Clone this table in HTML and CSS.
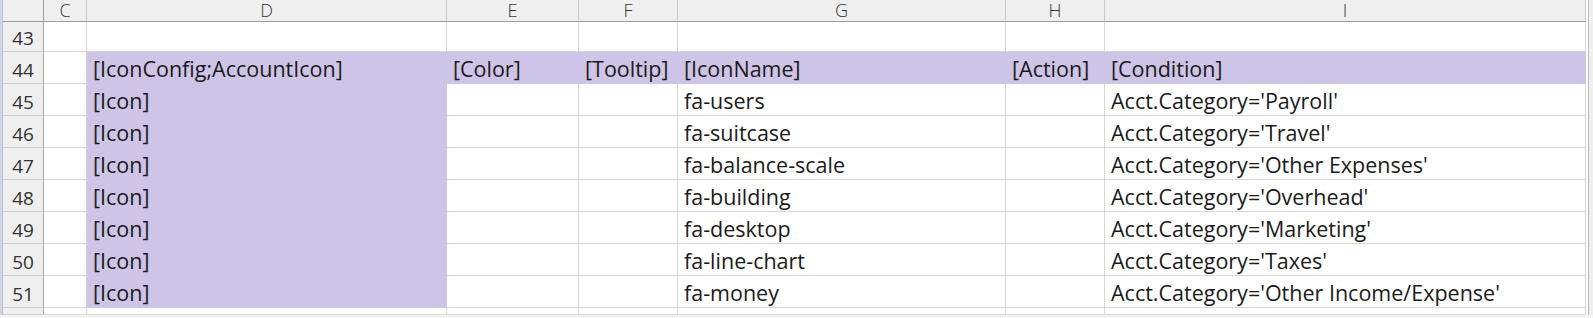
FILE: index.html
```html
<!DOCTYPE html>
<html>
<head>
<meta charset="utf-8">
<link rel="stylesheet" href="styles.css">
</head>
<body>
<div class="window">
  <div class="stripe"></div>
  <div class="sheet">
    <div class="ch corner"></div>
    <div class="ch">C</div>
    <div class="ch">D</div>
    <div class="ch">E</div>
    <div class="ch">F</div>
    <div class="ch">G</div>
    <div class="ch">H</div>
    <div class="ch">I</div>

    <div class="rh">43</div>
    <div class="c"></div><div class="c"></div><div class="c"></div><div class="c"></div><div class="c"></div><div class="c"></div><div class="c"></div>

    <div class="rh">44</div>
    <div class="c"></div>
    <div class="c p">[IconConfig;AccountIcon]</div>
    <div class="c p">[Color]</div>
    <div class="c p">[Tooltip]</div>
    <div class="c p">[IconName]</div>
    <div class="c p">[Action]</div>
    <div class="c p">[Condition]</div>

    <div class="rh">45</div>
    <div class="c"></div><div class="c p">[Icon]</div><div class="c"></div><div class="c"></div>
    <div class="c">fa-users</div><div class="c"></div><div class="c">Acct.Category='Payroll'</div>

    <div class="rh">46</div>
    <div class="c"></div><div class="c p">[Icon]</div><div class="c"></div><div class="c"></div>
    <div class="c">fa-suitcase</div><div class="c"></div><div class="c">Acct.Category='Travel'</div>

    <div class="rh">47</div>
    <div class="c"></div><div class="c p">[Icon]</div><div class="c"></div><div class="c"></div>
    <div class="c">fa-balance-scale</div><div class="c"></div><div class="c">Acct.Category='Other Expenses'</div>

    <div class="rh">48</div>
    <div class="c"></div><div class="c p">[Icon]</div><div class="c"></div><div class="c"></div>
    <div class="c">fa-building</div><div class="c"></div><div class="c">Acct.Category='Overhead'</div>

    <div class="rh">49</div>
    <div class="c"></div><div class="c p">[Icon]</div><div class="c"></div><div class="c"></div>
    <div class="c">fa-desktop</div><div class="c"></div><div class="c">Acct.Category='Marketing'</div>

    <div class="rh">50</div>
    <div class="c"></div><div class="c p">[Icon]</div><div class="c"></div><div class="c"></div>
    <div class="c">fa-line-chart</div><div class="c"></div><div class="c">Acct.Category='Taxes'</div>

    <div class="rh">51</div>
    <div class="c"></div><div class="c p">[Icon]</div><div class="c"></div><div class="c"></div>
    <div class="c">fa-money</div><div class="c"></div><div class="c">Acct.Category='Other Income/Expense'</div>

    <div class="rh"></div>
    <div class="c"></div><div class="c"></div><div class="c"></div><div class="c"></div><div class="c"></div><div class="c"></div><div class="c"></div>
  </div>
  <div class="edge"></div>
</div>
</body>
</html>
```

FILE: styles.css
```css
* { box-sizing: border-box; }
html, body { margin: 0; padding: 0; }
body {
  width: 1593px;
  height: 318px;
  overflow: hidden;
  background: #f4f4f4;
  font-family: "Open Sans", "Noto Sans", sans-serif;
}
.window {
  display: flex;
  align-items: flex-start;
  height: 315px;
  background: #ffffff;
}
.stripe {
  width: 3px;
  height: 315px;
  background: #ccd5e1;
  border-right: 1px solid #b9c3d0;
  flex: none;
}
.sheet {
  display: grid;
  grid-template-columns: 41px 43px 360px 132px 99px 328px 99px 481px;
  grid-template-rows: 22px 30px repeat(8, 32px) 7px;
  flex: none;
}
.ch {
  background: #efefef;
  border-right: 1px solid #c9c9c9;
  border-bottom: 1px solid #9e9e9e;
  color: #333;
  font-size: 18px;
  font-weight: 300;
  line-height: 20px;
  text-align: center;
}
.corner { border-right-color: #9e9e9e; }
.rh {
  background: #efefef;
  border-right: 1px solid #a6a6a6;
  border-bottom: 1px solid #cfcfcf;
  color: #333;
  font-size: 19px;
  display: flex;
  align-items: flex-end;
  justify-content: center;
  padding-bottom: 1px;
  line-height: 24px;
}
.c {
  border-right: 1px solid #d6d6d6;
  border-bottom: 1px solid #d6d6d6;
  font-size: 21.5px;
  color: #1a1a1a;
  display: flex;
  align-items: flex-end;
  padding: 0 4px 0 6px;
  line-height: 28px;
  white-space: nowrap;
  overflow: visible;
}
.c.p {
  background: #cec4e7;
  border-color: #cec4e7;
}
.edge {
  width: 7px;
  height: 315px;
  flex: none;
  padding-left: 2px;
  background: #ffffff;
}
.edge::before {
  content: "";
  display: block;
  height: 100%;
  width: 5px;
  border-left: 1px solid #bdbdbd;
  background: #f0f0f0;
}
```
